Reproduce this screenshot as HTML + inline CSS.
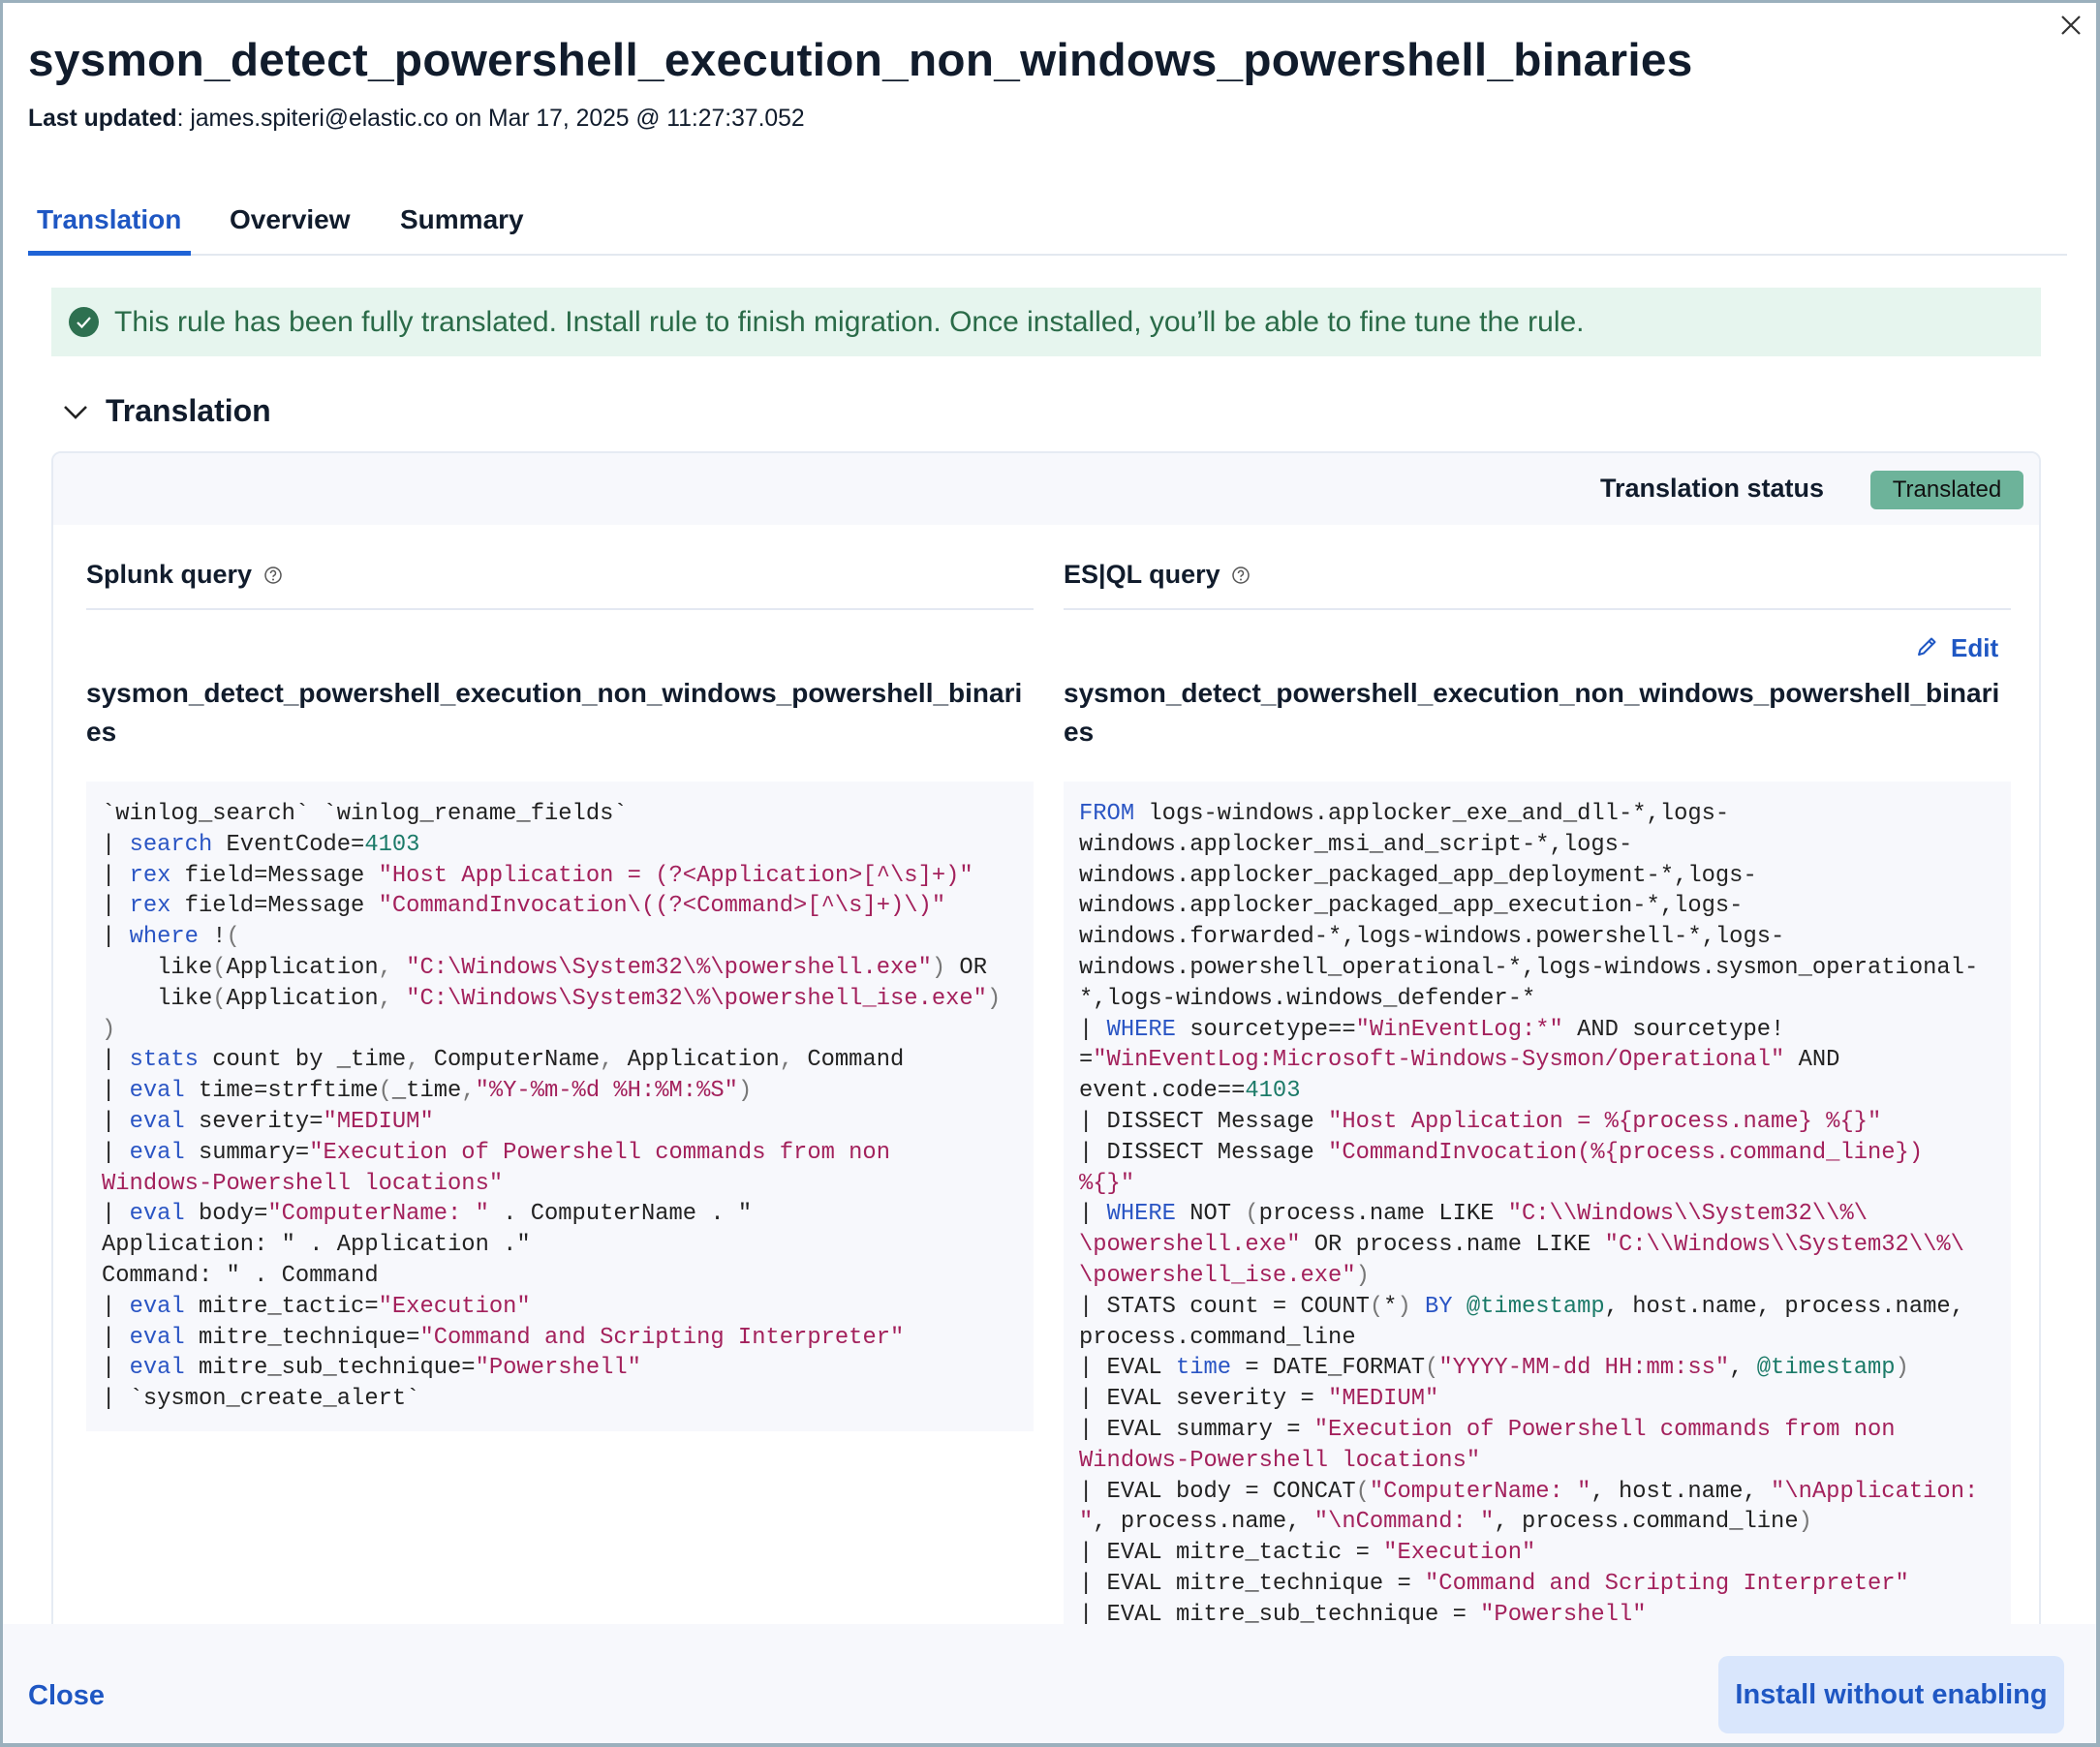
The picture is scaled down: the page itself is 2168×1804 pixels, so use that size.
<!DOCTYPE html>
<html><head><meta charset="utf-8"><style>
*{box-sizing:border-box;margin:0;padding:0}
html,body{width:2168px;height:1804px;overflow:hidden;background:#9bb0bd;font-family:"Liberation Sans",sans-serif;color:#111c2c}
#win{position:absolute;left:3px;top:3px;width:2161px;height:1797px;background:#fff;overflow:hidden}
.abs{position:absolute}
h1{position:absolute;left:26px;top:32px;font-size:47.7px;font-weight:bold;letter-spacing:0.3px;color:#111c2c;white-space:nowrap}
.upd{left:26px;top:106px;font-size:24.7px}
.tab{top:208px;font-size:28px;font-weight:bold}
.callout{left:50px;top:294px;width:2054px;height:71px;background:#e6f5ee}
.callout span{position:absolute;left:65px;top:19px;font-size:30px;color:#2a6b48;white-space:nowrap}
.panel{left:50px;top:463px;width:2054px;height:1400px;border:2px solid #e6ebf3;border-radius:10px;overflow:hidden}
.phead{left:0;top:0;width:100%;height:74px;background:#f7f8fc}
.lbl{font-size:27px;font-weight:bold;white-space:nowrap}
.rn{font-size:28px;font-weight:bold;line-height:40px}
pre{position:absolute;background:#f7f8fc;font-family:"Liberation Mono",monospace;font-size:23.8px;line-height:31.8px;padding:18px 16px 14px;color:#222;white-space:pre}
.k{color:#2a55c4}.s{color:#a3215c}.n{color:#1b7a68}.p{color:#777}
</style></head><body><div id="win">
<h1>sysmon_detect_powershell_execution_non_windows_powershell_binaries</h1>
<svg class="abs" style="left:2124px;top:12px" width="22" height="22" viewBox="0 0 22 22"><path d="M2 2L20 20M20 2L2 20" stroke="#333" stroke-width="2.2"/></svg>
<div class="abs upd"><b>Last updated</b>: james.spiteri@elastic.co on Mar 17, 2025 @ 11:27:37.052</div>
<div class="abs tab" style="left:35px;color:#1f57c3">Translation</div>
<div class="abs tab" style="left:234px">Overview</div>
<div class="abs tab" style="left:410px">Summary</div>
<div class="abs" style="left:26px;top:259px;width:2105px;height:2px;background:#e3e8f0"></div>
<div class="abs" style="left:26px;top:256px;width:168px;height:5px;background:#1f63d6"></div>
<div class="abs callout"><svg class="abs" style="left:18px;top:20px" width="31" height="31" viewBox="0 0 31 31"><circle cx="15.5" cy="15.5" r="15.5" fill="#2e7050"/><path d="M9 16l4.5 4.5L22 11" stroke="#fff" stroke-width="2.2" fill="none"/></svg><span>This rule has been fully translated. Install rule to finish migration. Once installed, you’ll be able to fine tune the rule.</span></div>
<svg class="abs" style="left:62px;top:414px" width="26" height="18" viewBox="0 0 26 18"><path d="M2 3l11 11L24 3" stroke="#222" stroke-width="2.6" fill="none"/></svg>
<div class="abs" style="left:106px;top:403px;font-size:32px;font-weight:bold">Translation</div>
<div class="abs panel">
 <div class="abs phead"></div>
 <div class="abs lbl" style="right:222px;top:21px">Translation status</div>
 <div class="abs" style="left:1876px;top:18px;width:158px;height:40px;background:#6db39a;border-radius:6px;font-size:24px;text-align:center;line-height:40px;color:#111">Translated</div>
 <div class="abs lbl" style="left:34px;top:110px">Splunk query <svg width="20" height="20" viewBox="0 0 20 20" style="vertical-align:-2px;margin-left:4px"><circle cx="10" cy="10" r="8" stroke="#555" stroke-width="1.5" fill="none"/><path d="M7.5 8a2.5 2.5 0 1 1 3.5 2.2c-.8.4-1 .9-1 1.6" stroke="#555" stroke-width="1.5" fill="none"/><circle cx="10" cy="14.5" r="1" fill="#555"/></svg></div>
 <div class="abs lbl" style="left:1043px;top:110px">ES|QL query <svg width="20" height="20" viewBox="0 0 20 20" style="vertical-align:-2px;margin-left:4px"><circle cx="10" cy="10" r="8" stroke="#555" stroke-width="1.5" fill="none"/><path d="M7.5 8a2.5 2.5 0 1 1 3.5 2.2c-.8.4-1 .9-1 1.6" stroke="#555" stroke-width="1.5" fill="none"/><circle cx="10" cy="14.5" r="1" fill="#555"/></svg></div>
 <div class="abs" style="left:34px;top:160px;width:978px;height:2px;background:#e3e8f2"></div>
 <div class="abs" style="left:1043px;top:160px;width:978px;height:2px;background:#e3e8f2"></div>
 <svg class="abs" style="left:1922px;top:188px" width="24" height="24" viewBox="0 0 24 24"><path d="M4 20l1.5-5L17 3.5l3.5 3.5L9 18.5z M14.5 6l3.5 3.5 M4 20l5-1.5" stroke="#1f57c3" stroke-width="2" fill="none" stroke-linejoin="round"/></svg>
 <div class="abs" style="left:1959px;top:186px;font-size:26px;color:#1f57c3;font-weight:bold">Edit</div>
 <div class="abs rn" style="left:34px;top:228px;width:980px;word-break:break-all">sysmon_detect_powershell_execution_non_windows_powershell_binaries</div>
 <div class="abs rn" style="left:1043px;top:228px;width:980px;word-break:break-all">sysmon_detect_powershell_execution_non_windows_powershell_binaries</div>
<pre style="left:34px;top:339px;width:978px;height:671px">`winlog_search` `winlog_rename_fields`
| <span class="k">search</span> EventCode=<span class="n">4103</span>
| <span class="k">rex</span> field=Message <span class="s">"Host Application = (?&lt;Application&gt;[^\s]+)"</span>
| <span class="k">rex</span> field=Message <span class="s">"CommandInvocation\((?&lt;Command&gt;[^\s]+)\)"</span>
| <span class="k">where</span> !<span class="p">(</span>
    like<span class="p">(</span>Application<span class="p">,</span> <span class="s">"C:\Windows\System32\%\powershell.exe"</span><span class="p">)</span> OR
    like<span class="p">(</span>Application<span class="p">,</span> <span class="s">"C:\Windows\System32\%\powershell_ise.exe"</span><span class="p">)</span>
<span class="p">)</span>
| <span class="k">stats</span> count by _time<span class="p">,</span> ComputerName<span class="p">,</span> Application<span class="p">,</span> Command
| <span class="k">eval</span> time=strftime<span class="p">(</span>_time<span class="p">,</span><span class="s">"%Y-%m-%d %H:%M:%S"</span><span class="p">)</span>
| <span class="k">eval</span> severity=<span class="s">"MEDIUM"</span>
| <span class="k">eval</span> summary=<span class="s">"Execution of Powershell commands from non
Windows-Powershell locations"</span>
| <span class="k">eval</span> body=<span class="s">"ComputerName: "</span> . ComputerName . "
Application: " . Application ."
Command: " . Command
| <span class="k">eval</span> mitre_tactic=<span class="s">"Execution"</span>
| <span class="k">eval</span> mitre_technique=<span class="s">"Command and Scripting Interpreter"</span>
| <span class="k">eval</span> mitre_sub_technique=<span class="s">"Powershell"</span>
| `sysmon_create_alert`</pre>
<pre style="left:1043px;top:339px;width:978px;height:1000px">
<span class="k">FROM</span> logs-windows.applocker_exe_and_dll-*,logs-
windows.applocker_msi_and_script-*,logs-
windows.applocker_packaged_app_deployment-*,logs-
windows.applocker_packaged_app_execution-*,logs-
windows.forwarded-*,logs-windows.powershell-*,logs-
windows.powershell_operational-*,logs-windows.sysmon_operational-
*,logs-windows.windows_defender-*
| <span class="k">WHERE</span> sourcetype==<span class="s">"WinEventLog:*"</span> AND sourcetype!
=<span class="s">"WinEventLog:Microsoft-Windows-Sysmon/Operational"</span> AND
event.code==<span class="n">4103</span>
| DISSECT Message <span class="s">"Host Application = %{process.name} %{}"</span>
| DISSECT Message <span class="s">"CommandInvocation(%{process.command_line})
%{}"</span>
| <span class="k">WHERE</span> NOT <span class="p">(</span>process.name LIKE <span class="s">"C:\\Windows\\System32\\%\
\powershell.exe"</span> OR process.name LIKE <span class="s">"C:\\Windows\\System32\\%\
\powershell_ise.exe"</span><span class="p">)</span>
| STATS count = COUNT<span class="p">(</span>*<span class="p">)</span> <span class="k">BY</span> <span class="n">@timestamp</span>, host.name, process.name,
process.command_line
| EVAL <span class="k">time</span> = DATE_FORMAT<span class="p">(</span><span class="s">"YYYY-MM-dd HH:mm:ss"</span>, <span class="n">@timestamp</span><span class="p">)</span>
| EVAL severity = <span class="s">"MEDIUM"</span>
| EVAL summary = <span class="s">"Execution of Powershell commands from non
Windows-Powershell locations"</span>
| EVAL body = CONCAT<span class="p">(</span><span class="s">"ComputerName: "</span>, host.name, <span class="s">"\nApplication:
"</span>, process.name, <span class="s">"\nCommand: "</span>, process.command_line<span class="p">)</span>
| EVAL mitre_tactic = <span class="s">"Execution"</span>
| EVAL mitre_technique = <span class="s">"Command and Scripting Interpreter"</span>
| EVAL mitre_sub_technique = <span class="s">"Powershell"</span>
| EVAL mitre_tags = <span class="s">"T1059"</span></pre>
</div>
<div class="abs" style="left:0;top:1674px;width:100%;height:130px;background:#f7f8fc"></div>
<div class="abs" style="left:26px;top:1732px;font-size:29px;color:#1f57c3;font-weight:bold">Close</div>
<div class="abs" style="left:1771px;top:1707px;width:357px;height:80px;background:#d9e6fc;border-radius:10px;font-size:29px;color:#1f57c3;font-weight:bold;text-align:center;line-height:80px">Install without enabling</div>
</div></body></html>
